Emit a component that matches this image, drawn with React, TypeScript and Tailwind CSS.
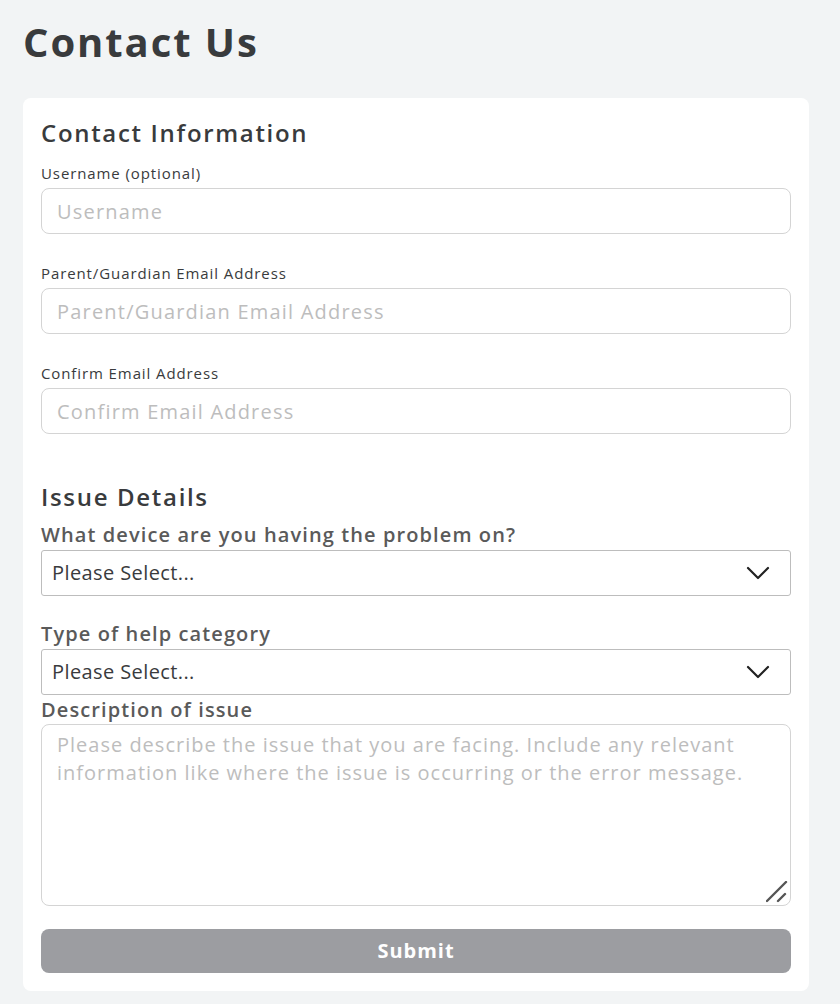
import React from "react";

const font = { fontFamily: '"Open Sans", "Noto Sans", sans-serif' };

const Chevron = () => (
  <svg
    className="pointer-events-none absolute right-[21px] top-1/2 -translate-y-1/2"
    width="24"
    height="14"
    viewBox="0 0 24 14"
    fill="none"
  >
    <path d="M2 2l10 10L22 2" stroke="#222" strokeWidth="2.2" strokeLinecap="round" strokeLinejoin="round" />
  </svg>
);

const TextField = ({ label, placeholder }: { label: string; placeholder: string }) => (
  <div className="flex flex-col">
    <label className="text-[15px] leading-[20px] tracking-[0.06em] text-[#393b3d] mb-[5px]">{label}</label>
    <input
      placeholder={placeholder}
      className="h-[46px] w-full rounded-lg border border-[#d4d4d4] bg-white px-[15px] text-[20px] tracking-[0.06em] text-[#393b3d] placeholder:text-[#bdbdbd] outline-none"
    />
  </div>
);

const SelectField = ({ label }: { label: string }) => (
  <div className="flex flex-col">
    <label className="text-[20px] leading-[24px] font-semibold tracking-[0.055em] text-[#5a5a5a] mb-[3px]">
      {label}
    </label>
    <div className="relative">
      <select className="h-[46px] w-full appearance-none rounded-[3px] border border-[#bdbdbd] bg-white pl-[10px] text-[20px] tracking-[0.02em] text-[#393b3d] outline-none">
        <option>Please Select...</option>
      </select>
      <Chevron />
    </div>
  </div>
);

export default function App() {
  return (
    <div className="min-h-screen bg-[#f2f4f5] pl-[23px] pt-[18px] pb-[14px]" style={font}>
      <h1 className="text-[40px] leading-[48px] font-bold tracking-[0.048em] text-[#393b3d]">Contact Us</h1>
      <div className="mt-[32px] w-[786px] rounded-lg bg-white px-[18px] pt-[19px] pb-[18px]">
        <h2 className="text-[24px] leading-[32px] font-semibold tracking-[0.07em] text-[#393b3d]">
          Contact Information
        </h2>
        <div className="mt-[14px] flex flex-col gap-[29px]">
          <TextField label="Username (optional)" placeholder="Username" />
          <TextField label="Parent/Guardian Email Address" placeholder="Parent/Guardian Email Address" />
          <TextField label="Confirm Email Address" placeholder="Confirm Email Address" />
        </div>
        <h2 className="mt-[47px] text-[24px] leading-[32px] font-semibold tracking-[0.07em] text-[#393b3d]">
          Issue Details
        </h2>
        <div className="mt-[10px]">
          <SelectField label="What device are you having the problem on?" />
        </div>
        <div className="mt-[26px]">
          <SelectField label="Type of help category" />
        </div>
        <div className="mt-[3px] flex flex-col">
          <label className="text-[20px] leading-[24px] font-semibold tracking-[0.055em] text-[#5a5a5a] mb-[2px]">
            Description of issue
          </label>
          <div className="relative">
            <textarea
              placeholder="Please describe the issue that you are facing. Include any relevant information like where the issue is occurring or the error message."
              className="block h-[182px] w-full resize-none rounded-lg border border-[#d4d4d4] bg-white px-[15px] pt-[6px] text-[20px] leading-[28px] tracking-[0.05em] text-[#393b3d] placeholder:text-[#bdbdbd] outline-none"
            />
            <svg className="pointer-events-none absolute right-[3px] bottom-[3px]" width="22" height="22" viewBox="0 0 22 22">
              <path d="M1 20L20 1M12 20L19 13" stroke="#555" strokeWidth="2.4" strokeLinecap="round" />
            </svg>
          </div>
        </div>
        <button className="mt-[23px] h-[44px] w-full rounded-lg bg-[#9c9da1] text-[20px] font-bold tracking-[0.05em] text-white">
          Submit
        </button>
      </div>
    </div>
  );
}
